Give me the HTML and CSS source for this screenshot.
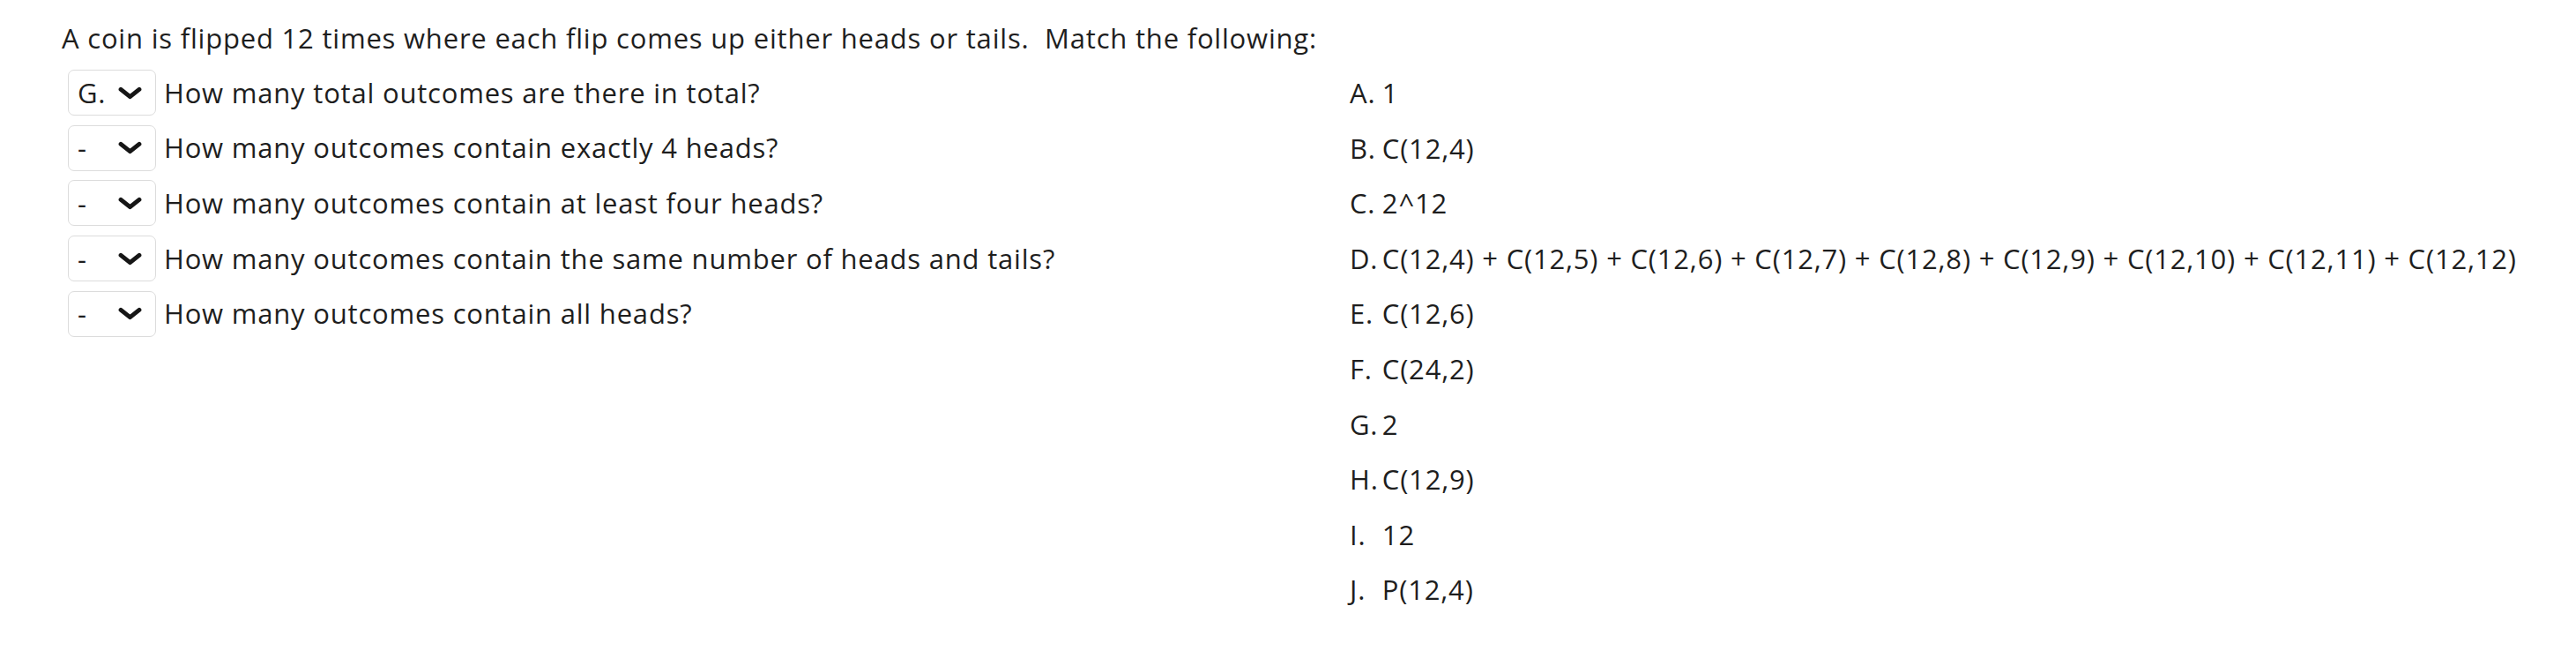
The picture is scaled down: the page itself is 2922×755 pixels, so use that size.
FILE: index.html
```html
<!DOCTYPE html>
<html lang="en">
<head>
<meta charset="utf-8">
<title>Matching question</title>
<link rel="stylesheet" href="styles.css">
</head>
<body>
<div class="page">
  <p class="prompt">A coin is flipped 12 times where each flip comes up either heads or tails.&nbsp; Match the following:</p>
  <div class="match">
    <div class="questions">
      <div class="q-row">
        <div class="select"><span class="sel-val">G.</span><svg class="chev" viewBox="0 0 26 14"><polyline points="3,3 13,11 23,3"/></svg></div>
        <span class="q-text">How many total outcomes are there in total?</span>
      </div>
      <div class="q-row">
        <div class="select"><span class="sel-val">-</span><svg class="chev" viewBox="0 0 26 14"><polyline points="3,3 13,11 23,3"/></svg></div>
        <span class="q-text">How many outcomes contain exactly 4 heads?</span>
      </div>
      <div class="q-row">
        <div class="select"><span class="sel-val">-</span><svg class="chev" viewBox="0 0 26 14"><polyline points="3,3 13,11 23,3"/></svg></div>
        <span class="q-text">How many outcomes contain at least four heads?</span>
      </div>
      <div class="q-row">
        <div class="select"><span class="sel-val">-</span><svg class="chev" viewBox="0 0 26 14"><polyline points="3,3 13,11 23,3"/></svg></div>
        <span class="q-text">How many outcomes contain the same number of heads and tails?</span>
      </div>
      <div class="q-row">
        <div class="select"><span class="sel-val">-</span><svg class="chev" viewBox="0 0 26 14"><polyline points="3,3 13,11 23,3"/></svg></div>
        <span class="q-text">How many outcomes contain all heads?</span>
      </div>
    </div>
    <ol class="answers">
      <li><span class="lbl">A.</span> 1</li>
      <li><span class="lbl">B.</span> C(12,4)</li>
      <li><span class="lbl">C.</span> 2^12</li>
      <li><span class="lbl">D.</span> C(12,4) + C(12,5) + C(12,6) + C(12,7) + C(12,8) + C(12,9) + C(12,10) + C(12,11) + C(12,12)</li>
      <li><span class="lbl">E.</span> C(12,6)</li>
      <li><span class="lbl">F.</span> C(24,2)</li>
      <li><span class="lbl">G.</span> 2</li>
      <li><span class="lbl">H.</span> C(12,9)</li>
      <li><span class="lbl">I.</span> 12</li>
      <li><span class="lbl">J.</span> P(12,4)</li>
    </ol>
  </div>
</div>
</body>
</html>
```

FILE: styles.css
```css
html, body {
  margin: 0;
  padding: 0;
  background: #ffffff;
}

body {
  font-family: "Open Sans", "Liberation Sans", sans-serif;
  font-size: 31px;
  letter-spacing: 0.8px;
  color: #1e1e1e;
}

.page {
  padding: 22px 0 0 70px;
}

.prompt {
  margin: 0;
  line-height: 42px;
}

.match {
  display: flex;
  align-items: flex-start;
  margin-top: 10px;
}

.questions {
  width: 1461px;
  padding-left: 7px;
  box-sizing: border-box;
  flex: none;
  display: flex;
  flex-direction: column;
}

.q-row {
  height: 62.6px;
  display: flex;
  align-items: center;
  gap: 9px;
}

.select {
  width: 100px;
  height: 52px;
  box-sizing: border-box;
  border: 1px solid #dcdcdc;
  border-radius: 7px;
  display: flex;
  align-items: center;
  justify-content: space-between;
  padding: 0 15px 0 10px;
  background: #fff;
}

.sel-val {
  line-height: 1;
}

.chev {
  width: 27px;
  height: 15px;
  fill: none;
  stroke: #161616;
  stroke-width: 4.8;
  stroke-linecap: round;
  stroke-linejoin: round;
}

.q-text {
  line-height: 1;
}

.answers {
  list-style: none;
  margin: 0;
  padding: 0;
}

.answers li {
  height: 62.6px;
  line-height: 62.6px;
  white-space: nowrap;
}

.answers .lbl {
  display: inline-block;
  width: 37px;
  margin-right: -9px;
}
```
